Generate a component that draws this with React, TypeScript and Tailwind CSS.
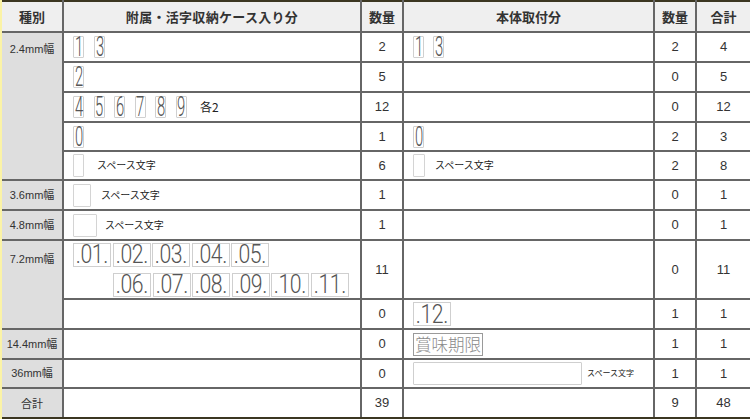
import React from "react";

const Digit = ({ c }: { c: string }) => (
  <span className="relative inline-block h-[22px] w-[11px] rounded-[1px] border border-[#d0d0d0]">
    <span className="absolute left-1/2 top-1/2 -translate-x-1/2 -translate-y-1/2 scale-x-[0.55] font-['Roboto',sans-serif] text-[27px] font-light leading-none text-[#555]">
      {c}
    </span>
  </span>
);

const Blank = ({ w }: { w: string }) => (
  <span className={`inline-block h-[23px] rounded-[1px] border border-[#d4d4d4] ${w}`} />
);

const Num = ({ c }: { c: string }) => (
  <span className="inline-flex h-[24px] w-[38px] items-center justify-center overflow-visible border border-[#cfcfcf]">
    <span className="inline-block scale-x-[0.85] font-['Roboto',sans-serif] text-[25px] font-light leading-none tracking-[-0.5px] text-[#555]">
      {c}
    </span>
  </span>
);

const Space = ({ size = "text-[10px]" }: { size?: string }) => (
  <span className={`${size} whitespace-nowrap text-[#222]`}>スペース文字</span>
);

const cell = "border-2 border-[#666] px-[9px] py-0";
const num = "border-2 border-[#666] text-center text-[13px] text-[#333]";
const side = "border-2 border-l-0 border-[#666] bg-[#dedede] text-center text-[11px] text-[#333]";

export default function App() {
  return (
    <div className="h-[419px] w-[750px] bg-[#fbf3a6] pl-[2px] font-['Liberation_Sans','Noto_Sans_CJK_JP',sans-serif]">
      <table className="w-[748px] table-fixed border-collapse bg-white">
        <colgroup>
          <col className="w-[61px]" />
          <col className="w-[298px]" />
          <col className="w-[42px]" />
          <col className="w-[251px]" />
          <col className="w-[42px]" />
          <col className="w-[54px]" />
        </colgroup>
        <thead>
          <tr className="h-[31px] bg-[#efefef] font-['Noto_Sans_CJK_JP',sans-serif] text-[13px] font-bold text-[#333]">
            <th className="border-2 border-l-0 border-[#666] border-t-[#3b3621]">種別</th>
            <th className="border-2 border-[#666] border-t-[#3b3621] tracking-[0.3px]">附属・活字収納ケース入り分</th>
            <th className="border-2 border-[#666] border-t-[#3b3621]">数量</th>
            <th className="border-2 border-[#666] border-t-[#3b3621]">本体取付分</th>
            <th className="border-2 border-[#666] border-t-[#3b3621]">数量</th>
            <th className="border-2 border-r-0 border-[#666] border-t-[#3b3621]">合計</th>
          </tr>
        </thead>
        <tbody>
          <tr className="h-[30px]">
            <td rowSpan={5} className={`${side} pt-[8px] align-top`}>2.4mm幅</td>
            <td className={cell}>
              <div className="flex gap-[10px]"><Digit c="1" /><Digit c="3" /></div>
            </td>
            <td className={num}>2</td>
            <td className={cell}>
              <div className="flex gap-[9px]"><Digit c="1" /><Digit c="3" /></div>
            </td>
            <td className={num}>2</td>
            <td className={`${num} border-r-0`}>4</td>
          </tr>
          <tr className="h-[30px]">
            <td className={cell}><div className="flex"><Digit c="2" /></div></td>
            <td className={num}>5</td>
            <td className={cell}></td>
            <td className={num}>0</td>
            <td className={`${num} border-r-0`}>5</td>
          </tr>
          <tr className="h-[30px]">
            <td className={cell}>
              <div className="flex items-center gap-[9.5px]">
                <Digit c="4" /><Digit c="5" /><Digit c="6" /><Digit c="7" /><Digit c="8" /><Digit c="9" />
                <span className="ml-[4px] font-['Noto_Sans_CJK_JP',sans-serif] text-[12px] text-[#222]">各2</span>
              </div>
            </td>
            <td className={num}>12</td>
            <td className={cell}></td>
            <td className={num}>0</td>
            <td className={`${num} border-r-0`}>12</td>
          </tr>
          <tr className="h-[29px]">
            <td className={cell}><div className="flex"><Digit c="0" /></div></td>
            <td className={num}>1</td>
            <td className={cell}><div className="flex"><Digit c="0" /></div></td>
            <td className={num}>2</td>
            <td className={`${num} border-r-0`}>3</td>
          </tr>
          <tr className="h-[29px]">
            <td className={cell}>
              <div className="flex items-center gap-[13px]"><Blank w="w-[11px]" /><Space /></div>
            </td>
            <td className={num}>6</td>
            <td className={cell}>
              <div className="flex items-center gap-[10px]"><Blank w="w-[12px]" /><Space /></div>
            </td>
            <td className={num}>2</td>
            <td className={`${num} border-r-0`}>8</td>
          </tr>
          <tr className="h-[30px]">
            <td className={side}>3.6mm幅</td>
            <td className={cell}>
              <div className="flex items-center gap-[10px]"><Blank w="w-[18px]" /><Space /></div>
            </td>
            <td className={num}>1</td>
            <td className={cell}></td>
            <td className={num}>0</td>
            <td className={`${num} border-r-0`}>1</td>
          </tr>
          <tr className="h-[30px]">
            <td className={side}>4.8mm幅</td>
            <td className={cell}>
              <div className="flex items-center gap-[8px]"><Blank w="w-[24px]" /><Space /></div>
            </td>
            <td className={num}>1</td>
            <td className={cell}></td>
            <td className={num}>0</td>
            <td className={`${num} border-r-0`}>1</td>
          </tr>
          <tr className="h-[59px]">
            <td rowSpan={2} className={`${side} pt-[10px] align-top`}>7.2mm幅</td>
            <td className={cell}>
              <div className="flex flex-col gap-[6px]">
                <div className="flex gap-[1.5px]">
                  {[".01.", ".02.", ".03.", ".04.", ".05."].map((s) => <Num key={s} c={s} />)}
                </div>
                <div className="ml-[40px] flex gap-[1.5px]">
                  {[".06.", ".07.", ".08.", ".09.", ".10.", ".11."].map((s) => <Num key={s} c={s} />)}
                </div>
              </div>
            </td>
            <td className={num}>11</td>
            <td className={cell}></td>
            <td className={num}>0</td>
            <td className={`${num} border-r-0`}>11</td>
          </tr>
          <tr className="h-[30px]">
            <td className={cell}></td>
            <td className={num}>0</td>
            <td className={cell}><div className="flex"><Num c=".12." /></div></td>
            <td className={num}>1</td>
            <td className={`${num} border-r-0`}>1</td>
          </tr>
          <tr className="h-[30px]">
            <td className={side}>14.4mm幅</td>
            <td className={cell}></td>
            <td className={num}>0</td>
            <td className={cell}>
              <div className="flex">
                <span className="inline-flex h-[23px] w-[70px] items-center overflow-hidden whitespace-nowrap border border-[#9a9a9a] pl-[1px] font-['Noto_Sans_CJK_JP',sans-serif] text-[16.5px] font-light leading-none text-[#8a8a8a]">
                  賞味期限
                </span>
              </div>
            </td>
            <td className={num}>1</td>
            <td className={`${num} border-r-0`}>1</td>
          </tr>
          <tr className="h-[29px]">
            <td className={side}>36mm幅</td>
            <td className={cell}></td>
            <td className={num}>0</td>
            <td className={cell}>
              <div className="flex items-center gap-[5px]">
                <span className="inline-block h-[23px] w-[169px] rounded-[1px] border border-[#cfcfcf]" />
                <Space size="text-[8px]" />
              </div>
            </td>
            <td className={num}>1</td>
            <td className={`${num} border-r-0`}>1</td>
          </tr>
          <tr className="h-[30px]">
            <td className={`${side} border-b-[#3b3621] font-['Noto_Sans_CJK_JP',sans-serif]`}>合計</td>
            <td className={`${cell} border-b-[#3b3621]`}></td>
            <td className={`${num} border-b-[#3b3621]`}>39</td>
            <td className={`${cell} border-b-[#3b3621]`}></td>
            <td className={`${num} border-b-[#3b3621]`}>9</td>
            <td className={`${num} border-r-0 border-b-[#3b3621]`}>48</td>
          </tr>
        </tbody>
      </table>
    </div>
  );
}
